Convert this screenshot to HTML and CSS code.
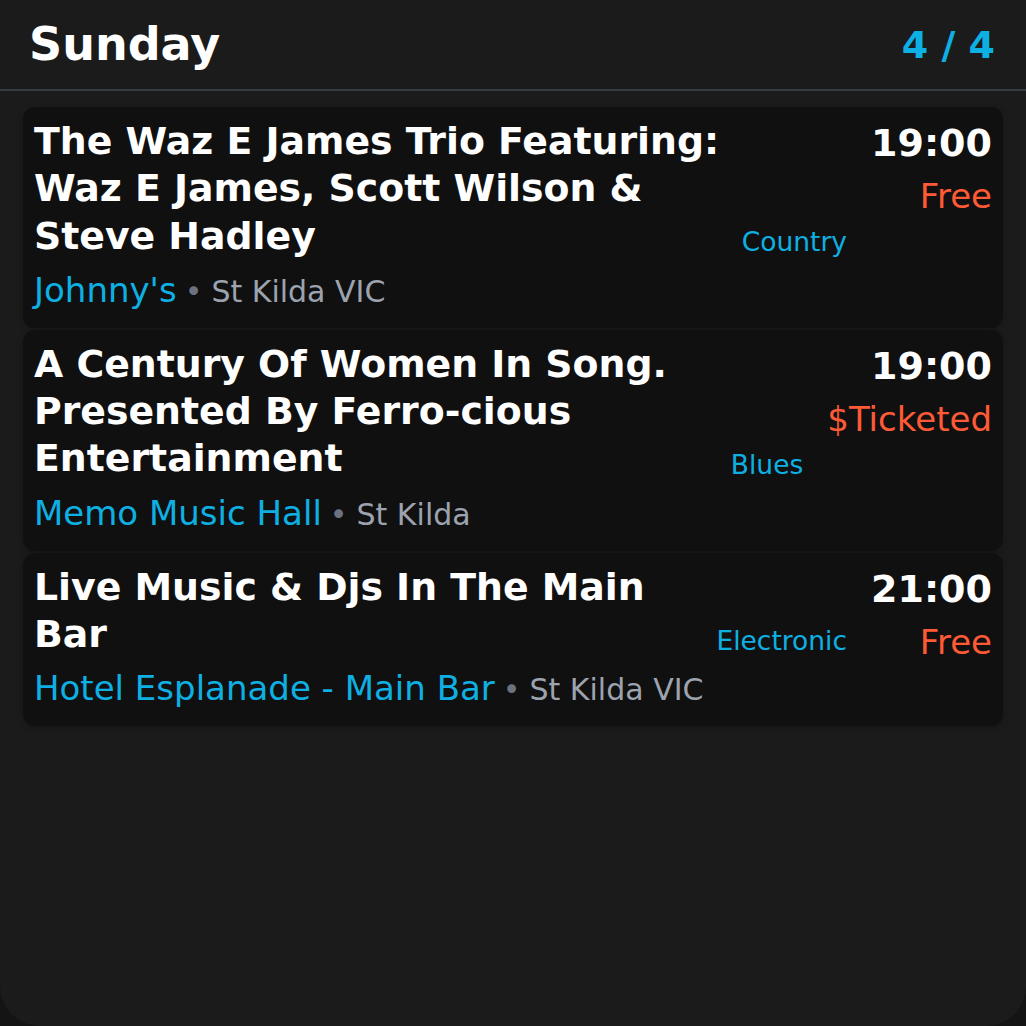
FILE: index.html
```html
<!DOCTYPE html>
<html lang="en">
<head>
<meta charset="utf-8">
<title>Sunday</title>
<link rel="stylesheet" href="styles.css">
</head>
<body>
<div class="app">
  <header class="header">
    <h1 class="day">Sunday</h1>
    <div class="count">4 / 4</div>
  </header>
  <main class="list">
    <article class="card">
      <h2 class="title">The Waz E James Trio Featuring: Waz E James, Scott Wilson &amp; Steve Hadley</h2>
      <div class="genre">Country</div>
      <div class="meta">
        <div class="time">19:00</div>
        <div class="price">Free</div>
      </div>
      <div class="venue-line"><span class="venue">Johnny's</span><span class="sep">•</span><span class="loc">St Kilda VIC</span></div>
    </article>
    <article class="card">
      <h2 class="title">A Century Of Women In Song. Presented By Ferro-cious Entertainment</h2>
      <div class="genre">Blues</div>
      <div class="meta">
        <div class="time">19:00</div>
        <div class="price">$Ticketed</div>
      </div>
      <div class="venue-line"><span class="venue">Memo Music Hall</span><span class="sep">•</span><span class="loc">St Kilda</span></div>
    </article>
    <article class="card">
      <h2 class="title">Live Music &amp; Djs In The Main Bar</h2>
      <div class="genre">Electronic</div>
      <div class="meta">
        <div class="time">21:00</div>
        <div class="price">Free</div>
      </div>
      <div class="venue-line"><span class="venue">Hotel Esplanade - Main Bar</span><span class="sep">•</span><span class="loc">St Kilda VIC</span></div>
    </article>
  </main>
</div>
</body>
</html>
```
FILE: styles.css
```css
* { box-sizing: border-box; }
html, body {
  margin: 0;
  padding: 0;
  background: #141414;
}
body {
  font-family: "DejaVu Sans", "Noto Sans", sans-serif;
  color: #ffffff;
}
.app {
  width: 1026px;
  height: 1026px;
  background: #1b1b1b;
  border-radius: 0 0 40px 40px;
  overflow: hidden;
}
.header {
  display: flex;
  justify-content: space-between;
  align-items: center;
  height: 91px;
  padding: 0 31px 0 29px;
  border-bottom: 2px solid #363b46;
}
.day {
  margin: 0;
  font-size: 46px;
  font-weight: 700;
  line-height: 1.164;
}
.count {
  font-size: 38px;
  font-weight: 700;
  color: #0eb0e3;
}
.list {
  display: flex;
  flex-direction: column;
  gap: 2px;
  padding: 16px 23px;
}
.card {
  display: grid;
  grid-template-columns: 1fr auto auto;
  grid-template-rows: auto auto;
  column-gap: 18px;
  padding: 11px;
  background: #101010;
  border-radius: 12px;
  box-shadow: 0 2px 6px rgba(0, 0, 0, 0.2);
}
.title {
  grid-column: 1;
  grid-row: 1;
  margin: 0;
  font-size: 37.8px;
  font-weight: 700;
  line-height: 47.3px;
  color: #ffffff;
}
.genre {
  grid-column: 2;
  grid-row: 1;
  align-self: end;
  font-size: 26.5px;
  line-height: 1.3;
  color: #0eb0e3;
}
.meta {
  grid-column: 3;
  grid-row: 1 / 3;
  align-self: start;
  margin-left: 6px;
  text-align: right;
}
.time {
  font-size: 38px;
  font-weight: 700;
  line-height: 50px;
}
.price {
  margin-top: 4px;
  font-size: 34px;
  line-height: 48px;
  color: #ff5a36;
}
.venue-line {
  grid-column: 1 / 3;
  grid-row: 2;
  margin-top: 5px;
  font-size: 34px;
  line-height: 51px;
  white-space: nowrap;
}
.venue {
  color: #0eb0e3;
}
.sep {
  font-size: 30px;
  color: #6b7280;
  margin: 0 9px 0 8px;
}
.loc {
  font-size: 30px;
  color: #9ca3af;
}
```
